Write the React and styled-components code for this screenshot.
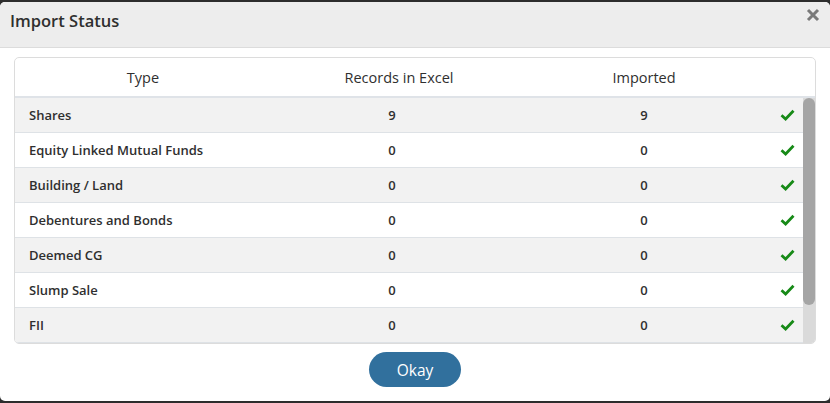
import React from 'react';
import styled, { createGlobalStyle } from 'styled-components';

const GlobalStyle = createGlobalStyle`
  html, body {
    margin: 0;
    padding: 0;
    background: #2d2d2d;
  }
  #root {
    height: 403px;
    padding-top: 2px;
    box-sizing: border-box;
  }
`;

const Modal = styled.div`
  height: 399px;
  background: #fff;
  border-radius: 5px;
  overflow: hidden;
  display: flex;
  flex-direction: column;
  font-family: "Open Sans", "Noto Sans", sans-serif;
  color: #333;
`;

const Header = styled.div`
  height: 46px;
  flex: none;
  background: #ededed;
  border-bottom: 1px solid #dcdcdc;
  display: flex;
  align-items: center;
  justify-content: space-between;
  padding: 0 10px;
  box-sizing: border-box;
`;

const Title = styled.h4`
  margin: 0 0 8px;
  font-size: 16.5px;
  font-weight: 600;
  color: #2f2f2f;
`;

const CloseButton = styled.button`
  border: 0;
  background: none;
  padding: 0;
  margin-bottom: 20px;
  width: 14px;
  height: 14px;
  display: flex;
  cursor: pointer;
`;

const Body = styled.div`
  flex: 1;
  display: flex;
  flex-direction: column;
  align-items: center;
  padding: 9px 14px 0;
`;

const Card = styled.div`
  align-self: stretch;
  height: 287px;
  border: 1px solid #dcdcdc;
  border-radius: 5px;
  box-sizing: border-box;
  overflow: hidden;
  display: flex;
  flex-direction: column;
`;

const cols = '256px 256px 234px 1fr';

const HeadRow = styled.div`
  display: grid;
  grid-template-columns: ${cols};
  height: 38px;
  flex: none;
  border-bottom: 2px solid #dfe3e8;
  align-items: center;
  font-size: 14.5px;
  font-weight: 500;
  color: #2f2f2f;
`;

const HeadCell = styled.div`
  text-align: center;
`;

const TableBody = styled.div`
  flex: 1;
  display: flex;
  overflow: hidden;
`;

const RowList = styled.div`
  flex: 1;
  display: flex;
  flex-direction: column;
`;

const ScrollTrack = styled.div`
  width: 12px;
  flex: none;
  background: #dadada;
`;

const ScrollThumb = styled.div`
  height: 207px;
  background: #a5a5a5;
  border-radius: 6px;
`;

const Row = styled.div`
  display: grid;
  grid-template-columns: ${cols};
  height: 35px;
  flex: none;
  box-sizing: border-box;
  align-items: center;
  border-bottom: 1px solid #dee2e6;
  background: ${p => (p.$odd ? '#f2f2f2' : '#fff')};
  font-size: 13px;
  font-weight: 600;
  color: #2f2f2f;
`;

const NameCell = styled.div`
  padding-left: 14px;
`;

const NumCell = styled.div`
  text-align: center;
  padding-right: ${p => p.$shift || 0};
`;

const CheckCell = styled.div`
  display: flex;
  justify-content: flex-end;
  padding-right: 8px;
`;

const OkayButton = styled.button`
  margin-top: 8px;
  width: 92px;
  height: 35px;
  border: 0;
  border-radius: 18px;
  background: #31709d;
  color: #fff;
  font-family: "Open Sans", "Noto Sans", sans-serif;
  font-size: 15.5px;
  font-weight: 500;
  cursor: pointer;
`;

const rows = [
  ['Shares', 9, 9],
  ['Equity Linked Mutual Funds', 0, 0],
  ['Building / Land', 0, 0],
  ['Debentures and Bonds', 0, 0],
  ['Deemed CG', 0, 0],
  ['Slump Sale', 0, 0],
  ['FII', 0, 0],
];

function Check() {
  return (
    <svg width="15" height="12" viewBox="0 0 15 12">
      <path d="M1.5 6.2 L5.6 10 L13.5 1.8" fill="none" stroke="#178a17" strokeWidth="2.8" />
    </svg>
  );
}

export default function App() {
  return (
    <>
      <GlobalStyle />
      <Modal>
        <Header>
          <Title>Import Status</Title>
          <CloseButton aria-label="close">
            <svg width="14" height="14" viewBox="0 0 14 14">
              <path d="M2 2 L12 12 M12 2 L2 12" stroke="#7a7a7a" strokeWidth="3" />
            </svg>
          </CloseButton>
        </Header>
        <Body>
          <Card>
            <HeadRow>
              <HeadCell>Type</HeadCell>
              <HeadCell>Records in Excel</HeadCell>
              <HeadCell>Imported</HeadCell>
              <HeadCell />
            </HeadRow>
            <TableBody>
              <RowList>
                {rows.map(([name, rec, imp], i) => (
                  <Row key={name} $odd={i % 2 === 0}>
                    <NameCell>{name}</NameCell>
                    <NumCell $shift="14px">{rec}</NumCell>
                    <NumCell>{imp}</NumCell>
                    <CheckCell>
                      <Check />
                    </CheckCell>
                  </Row>
                ))}
              </RowList>
              <ScrollTrack>
                <ScrollThumb />
              </ScrollTrack>
            </TableBody>
          </Card>
          <OkayButton>Okay</OkayButton>
        </Body>
      </Modal>
    </>
  );
}
